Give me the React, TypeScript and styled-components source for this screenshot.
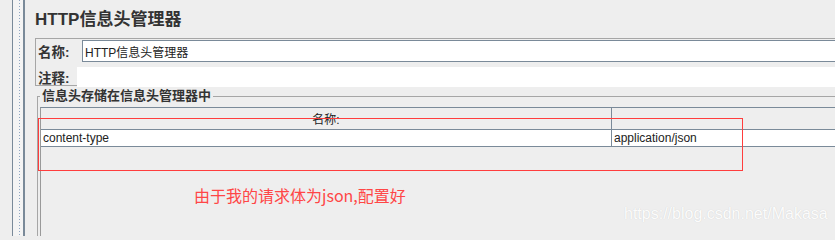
import styled, { createGlobalStyle } from 'styled-components';

const GlobalStyle = createGlobalStyle`
  html, body {
    margin: 0;
    padding: 0;
    background: #eeeeee;
  }
  body {
    font-family: "Liberation Sans", "Noto Sans CJK SC", sans-serif;
    color: #333;
  }
`;

const Page = styled.div`
  position: relative;
  display: flex;
  width: 835px;
  height: 236px;
  overflow: hidden;
  background: #eeeeee;
`;

const SideRail = styled.div`
  flex: none;
  width: 35px;
  padding-left: 12px;
  box-sizing: border-box;
  display: flex;
`;

const RailTrack = styled.div`
  width: 13px;
  box-sizing: border-box;
  border-left: 1px solid #7a8a99;
  border-right: 2px solid #7a8a99;
  background-color: #f4f4f4;
  background-image: repeating-linear-gradient(
    to bottom,
    #8fa6c2 0 1px,
    transparent 1px 3px
  );
  background-size: 1px 100%;
  background-position: 6px 0;
  background-repeat: no-repeat;
`;

const Main = styled.div`
  flex: none;
  width: 840px;
  display: flex;
  flex-direction: column;
`;

const Title = styled.h1`
  margin: 0;
  height: 38px;
  padding-top: 9px;
  box-sizing: border-box;
  font-size: 17px;
  line-height: 22px;
  font-weight: bold;
  color: #333;
`;

const NamePanel = styled.div`
  border: 1px solid #a6a6a6;
  padding: 1px 0 0 1px;
  display: flex;
  flex-direction: column;
  gap: 5px;
`;

const FieldRow = styled.div<{ $labelWidth: number; $height: number }>`
  display: grid;
  grid-template-columns: ${(p) => p.$labelWidth}px 1fr;
  height: ${(p) => p.$height}px;
  align-items: center;
`;

const FieldLabel = styled.label`
  padding-left: 1px;
  font-size: 13.5px;
  font-weight: bold;
  color: #333;
`;

const TextInput = styled.div<{ $bordered?: boolean }>`
  height: 100%;
  box-sizing: border-box;
  background: #fff;
  border: ${(p) => (p.$bordered ? '1px solid #7a8a99' : 'none')};
  padding-left: 2px;
  display: flex;
  align-items: center;
  font-size: 12px;
  color: #222;
`;

const GroupBox = styled.fieldset`
  margin: 3px 0 0 2px;
  padding: 4px 0 0 2px;
  border: 1px solid #a6a6a6;
  border-bottom: none;
  flex: 1;
  min-width: 0;
  display: flex;
  flex-direction: column;
`;

const GroupLegend = styled.legend`
  margin: 0;
  padding: 0 2px;
  font-size: 13px;
  line-height: 14px;
  font-weight: bold;
  color: #333;
`;

const TablePane = styled.div`
  flex: 1;
  border-top: 1px solid #7a8a99;
  border-left: 1px solid #999;
  display: flex;
  flex-direction: column;
`;

const HeaderRow = styled.div`
  display: flex;
  height: 21px;
  border-bottom: 1px solid #7a8a99;
`;

const HeaderCell = styled.div<{ $width?: number }>`
  ${(p) => (p.$width ? `width: ${p.$width}px; flex: none;` : 'flex: 1;')}
  box-sizing: border-box;
  border-right: 1px solid #7a8a99;
  display: flex;
  align-items: center;
  justify-content: center;
  font-size: 12px;
  color: #222;
`;

const DataRow = styled.div`
  display: flex;
  height: 16px;
  background: #fff;
  border-bottom: 1px solid #7a8a99;
`;

const DataCell = styled.div<{ $width?: number }>`
  ${(p) => (p.$width ? `width: ${p.$width}px; flex: none;` : 'flex: 1;')}
  box-sizing: border-box;
  border-right: 1px solid #7a8a99;
  padding-left: 2px;
  display: flex;
  align-items: center;
  font-size: 12px;
  color: #222;
`;

const MarkBox = styled.div`
  position: absolute;
  left: 38px;
  top: 118px;
  width: 705px;
  height: 53px;
  box-sizing: border-box;
  border: 1.5px solid #ff3d3d;
  pointer-events: none;
`;

const MarkNote = styled.div`
  position: absolute;
  left: 194px;
  top: 184px;
  font-family: "Noto Sans CJK SC", sans-serif;
  font-size: 16px;
  line-height: 22px;
  color: #ff4646;
`;

const Watermark = styled.div`
  position: absolute;
  left: 624px;
  top: 204px;
  font-family: "Liberation Sans", sans-serif;
  font-size: 16px;
  line-height: 20px;
  color: rgba(255, 255, 255, 0.95);
  text-shadow: 0 0 1px rgba(0, 0, 0, 0.15);
`;

const App = () => (
  <>
    <GlobalStyle />
    <Page>
      <SideRail>
        <RailTrack />
      </SideRail>
      <Main>
        <Title>HTTP信息头管理器</Title>
        <NamePanel>
          <FieldRow $labelWidth={45} $height={22}>
            <FieldLabel>名称:</FieldLabel>
            <TextInput $bordered>HTTP信息头管理器</TextInput>
          </FieldRow>
          <FieldRow $labelWidth={40} $height={18}>
            <FieldLabel>注释:</FieldLabel>
            <TextInput />
          </FieldRow>
        </NamePanel>
        <GroupBox>
          <GroupLegend>信息头存储在信息头管理器中</GroupLegend>
          <TablePane>
            <HeaderRow>
              <HeaderCell $width={571}>名称:</HeaderCell>
              <HeaderCell />
            </HeaderRow>
            <DataRow>
              <DataCell $width={571}>content-type</DataCell>
              <DataCell>application/json</DataCell>
            </DataRow>
          </TablePane>
        </GroupBox>
      </Main>
      <MarkBox />
      <MarkNote>由于我的请求体为json,配置好</MarkNote>
      <Watermark>https://blog.csdn.net/Makasa</Watermark>
    </Page>
  </>
);

export default App;
